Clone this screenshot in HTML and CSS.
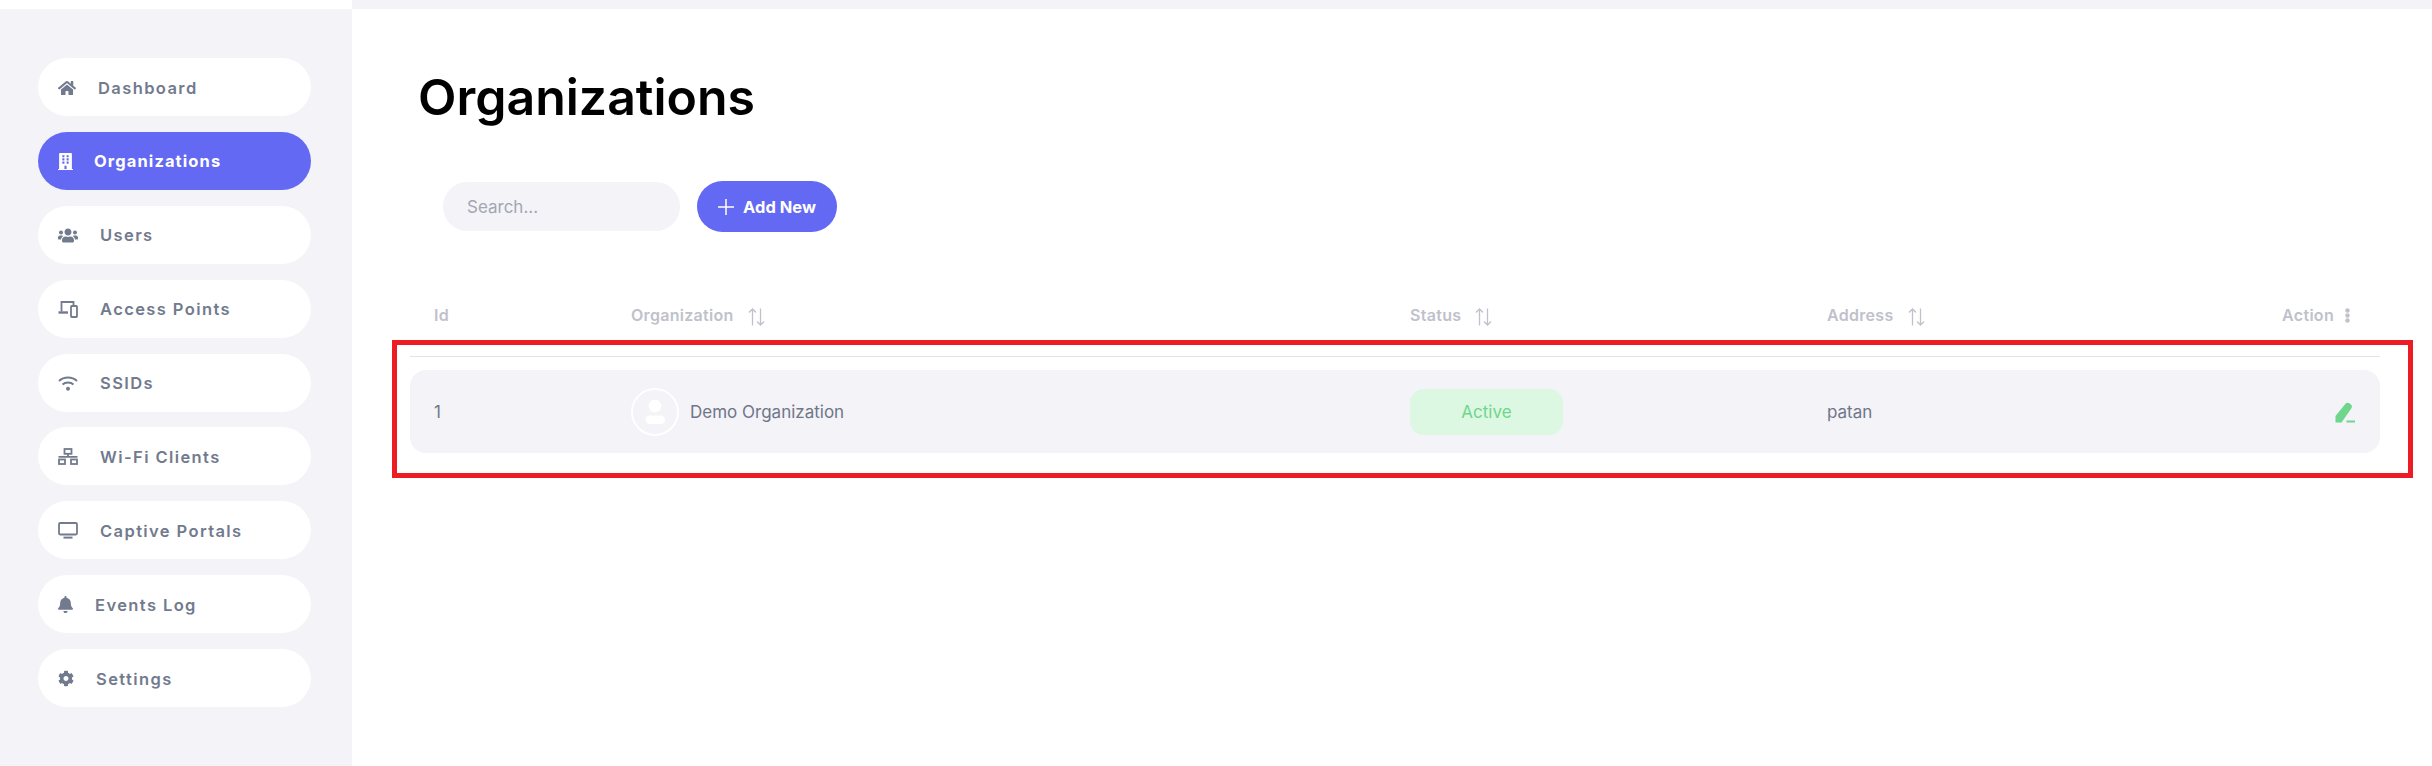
FILE: index.html
```html
<!DOCTYPE html>
<html lang="en">
<head>
    <meta charset="UTF-8">
    <title>Organizations</title>
    <link rel="stylesheet" href="styles.css">
</head>
<body>
    <div class="sidebar">
        <a class="nav-item" href="#">
            <svg class="nav-icon icon-18" viewBox="0 0 576 512"><path d="M280.37 148.26L96 300.11V464a16 16 0 0 0 16 16l112.06-.29a16 16 0 0 0 15.92-16V368a16 16 0 0 1 16-16h64a16 16 0 0 1 16 16v95.64a16 16 0 0 0 16 16.05L464 480a16 16 0 0 0 16-16V300L295.67 148.26a12.19 12.19 0 0 0-15.3 0zM571.6 251.47L488 182.56V44.05a12 12 0 0 0-12-12h-56a12 12 0 0 0-12 12v72.61L318.47 43a48 48 0 0 0-61 0L4.34 251.47a12 12 0 0 0-1.6 16.9l25.5 31A12 12 0 0 0 45.15 301l235.22-193.74a12.19 12.19 0 0 1 15.3 0L530.9 301a12 12 0 0 0 16.9-1.6l25.5-31a12 12 0 0 0-1.7-16.93z"/></svg>
            Dashboard
        </a>
        <a class="nav-item active" href="#">
            <svg class="nav-icon icon-15" viewBox="0 0 448 512"><path d="M436 480h-20V24c0-13.255-10.745-24-24-24H56C42.745 0 32 10.745 32 24v456H12c-6.627 0-12 5.373-12 12v20h448v-20c0-6.627-5.373-12-12-12zM128 76c0-6.627 5.373-12 12-12h40c6.627 0 12 5.373 12 12v40c0 6.627-5.373 12-12 12h-40c-6.627 0-12-5.373-12-12V76zm0 96c0-6.627 5.373-12 12-12h40c6.627 0 12 5.373 12 12v40c0 6.627-5.373 12-12 12h-40c-6.627 0-12-5.373-12-12v-40zm52 148h-40c-6.627 0-12-5.373-12-12v-40c0-6.627 5.373-12 12-12h40c6.627 0 12 5.373 12 12v40c0 6.627-5.373 12-12 12zm76 160h-64v-84c0-6.627 5.373-12 12-12h40c6.627 0 12 5.373 12 12v84zm64-172c0 6.627-5.373 12-12 12h-40c-6.627 0-12-5.373-12-12v-40c0-6.627 5.373-12 12-12h40c6.627 0 12 5.373 12 12v40zm0-96c0 6.627-5.373 12-12 12h-40c-6.627 0-12-5.373-12-12v-40c0-6.627 5.373-12 12-12h40c6.627 0 12 5.373 12 12v40zm0-96c0 6.627-5.373 12-12 12h-40c-6.627 0-12-5.373-12-12V76c0-6.627 5.373-12 12-12h40c6.627 0 12 5.373 12 12v40z"/></svg>
            Organizations
        </a>
        <a class="nav-item" href="#">
            <svg class="nav-icon icon-20" viewBox="0 0 640 512"><path d="M96 224c35.3 0 64-28.7 64-64s-28.7-64-64-64-64 28.7-64 64 28.7 64 64 64zm448 0c35.3 0 64-28.7 64-64s-28.7-64-64-64-64 28.7-64 64 28.7 64 64 64zm32 32h-64c-17.6 0-33.5 7.1-45.1 18.6 40.3 22.1 68.9 62 75.1 109.4h66c17.7 0 32-14.3 32-32v-32c0-35.3-28.7-64-64-64zm-256 0c61.9 0 112-50.1 112-112S381.9 32 320 32 208 82.1 208 144s50.1 112 112 112zm76.8 32h-8.3c-20.8 10-43.9 16-68.5 16s-47.6-6-68.5-16h-8.3C179.6 288 128 339.6 128 403.2V432c0 26.5 21.5 48 48 48h288c26.5 0 48-21.5 48-48v-28.8c0-63.6-51.6-115.2-115.2-115.2zm-223.7-13.4C161.5 263.1 145.6 256 128 256H64c-35.3 0-64 28.7-64 64v32c0 17.7 14.3 32 32 32h65.9c6.3-47.4 34.9-87.3 75.2-109.4z"/></svg>
            Users
        </a>
        <a class="nav-item" href="#">
            <svg class="nav-icon icon-20 line" viewBox="0 0 20 17"><path d="M3.5 10.5V1h12v3.5"/><path d="M0.5 11.5H10" stroke-width="2.4"/><rect x="13" y="5" width="6" height="11" rx="0.8"/></svg>
            Access Points
        </a>
        <a class="nav-item" href="#">
            <svg class="nav-icon icon-20 line" viewBox="0 0 20 16"><path d="M1 5.5c5-4.6 13-4.6 18 0M4.5 9c3-2.6 8-2.6 11 0" stroke-width="2"/><circle class="dot" cx="10" cy="13.2" r="2"/></svg>
            SSIDs
        </a>
        <a class="nav-item" href="#">
            <svg class="nav-icon icon-20 line" viewBox="0 0 20 17"><rect x="6.5" y="1" width="7" height="4.8"/><rect x="1" y="11.5" width="6" height="4.5"/><rect x="13" y="11.5" width="6" height="4.5"/><path d="M10 5.8v3M0.5 8.800h19"/></svg>
            Wi-Fi Clients
        </a>
        <a class="nav-item" href="#">
            <svg class="nav-icon icon-20 line" viewBox="0 0 20 17"><rect x="1" y="1" width="18" height="11.5" rx="1.2"/><path d="M5.5 15.6h9" stroke-width="2"/></svg>
            Captive Portals
        </a>
        <a class="nav-item" href="#">
            <svg class="nav-icon icon-15" viewBox="0 0 448 512"><path d="M224 512c35.32 0 63.97-28.65 63.97-64H160.03c0 35.35 28.65 64 63.97 64zm215.39-149.71c-19.32-20.76-55.47-51.99-55.47-154.29 0-77.7-54.48-139.9-127.94-155.16V32c0-17.67-14.32-32-31.98-32s-31.98 14.33-31.98 32v20.84C118.56 68.1 64.08 130.3 64.08 208c0 102.3-36.15 133.53-55.47 154.29-6 6.45-8.66 14.16-8.61 21.71.11 16.4 12.98 32 32.1 32h383.8c19.12 0 32-15.6 32.1-32 .05-7.55-2.61-15.27-8.61-21.71z"/></svg>
            Events Log
        </a>
        <a class="nav-item" href="#">
            <svg class="nav-icon icon-16" viewBox="0 0 512 512"><path d="M487.4 315.7l-42.6-24.6c4.3-23.2 4.3-47 0-70.2l42.6-24.6c4.9-2.8 7.1-8.6 5.5-14-11.1-35.6-30-67.8-54.7-94.6-3.8-4.1-10-5.1-14.8-2.3L380.8 110c-17.9-15.4-38.5-27.3-60.8-35.1V25.8c0-5.6-3.9-10.5-9.4-11.7-36.7-8.2-74.3-7.8-109.2 0-5.5 1.2-9.4 6.1-9.4 11.7V75c-22.2 7.9-42.8 19.8-60.8 35.1L88.7 85.5c-4.9-2.8-11-1.9-14.8 2.3-24.7 26.7-43.6 58.9-54.7 94.6-1.7 5.4.6 11.2 5.5 14L67.3 221c-4.3 23.2-4.3 47 0 70.2l-42.6 24.6c-4.9 2.8-7.1 8.6-5.5 14 11.1 35.6 30 67.8 54.7 94.6 3.8 4.1 10 5.1 14.8 2.3l42.6-24.6c17.9 15.4 38.5 27.3 60.8 35.1v49.2c0 5.6 3.9 10.5 9.4 11.7 36.7 8.2 74.3 7.8 109.2 0 5.5-1.2 9.4-6.1 9.4-11.7v-49.2c22.2-7.9 42.8-19.8 60.8-35.1l42.6 24.6c4.9 2.8 11 1.9 14.8-2.3 24.7-26.7 43.6-58.9 54.7-94.6 1.5-5.5-.7-11.3-5.6-14.1zM256 336c-44.1 0-80-35.9-80-80s35.9-80 80-80 80 35.9 80 80-35.9 80-80 80z"/></svg>
            Settings
        </a>
    </div>

    <div class="main">
        <div class="top-strip"></div>
        <div class="content">
            <h1 class="page-title">Organizations</h1>

            <div class="toolbar">
                <input class="search" type="text" placeholder="Search...">
                <button class="add-btn">
                    <svg class="plus" viewBox="0 0 16 16"><path d="M8 0v16M0 8h16"/></svg>
                    Add New
                </button>
            </div>

            <div class="table">
                <div class="table-head">
                    <div class="cell">Id</div>
                    <div class="cell">Organization
                        <svg class="sort" viewBox="0 0 17 18"><path d="M4.5 17.5V1M1 4.5L4.5 1 8 4.5M12.5 0.5V17M9 13.5l3.5 3.5 3.5-3.5"/></svg>
                    </div>
                    <div class="cell">Status
                        <svg class="sort" viewBox="0 0 17 18"><path d="M4.5 17.5V1M1 4.5L4.5 1 8 4.5M12.5 0.5V17M9 13.5l3.5 3.5 3.5-3.5"/></svg>
                    </div>
                    <div class="cell">Address
                        <svg class="sort" viewBox="0 0 17 18"><path d="M4.5 17.5V1M1 4.5L4.5 1 8 4.5M12.5 0.5V17M9 13.5l3.5 3.5 3.5-3.5"/></svg>
                    </div>
                    <div class="cell cell-action">Action
                        <svg class="dots" viewBox="0 0 5 15"><circle cx="2.5" cy="2.5" r="2.2"/><circle cx="2.5" cy="7.5" r="2.2"/><circle cx="2.5" cy="12.5" r="2.2"/></svg>
                    </div>
                </div>

                <div class="table-row">
                    <div class="cell">1</div>
                    <div class="cell org-cell">
                        <span class="avatar">
                            <svg viewBox="0 0 44 44"><circle cx="22" cy="16" r="6.5"/><rect x="12.5" y="25.5" width="19.5" height="8.5" rx="4.2"/></svg>
                        </span>
                        Demo Organization
                    </div>
                    <div class="cell"><span class="badge">Active</span></div>
                    <div class="cell">patan</div>
                    <div class="cell cell-action">
                        <svg class="edit" viewBox="0 0 20 21"><path d="M0.5 20.5V14L10.5 1.8c1-1.2 2.6-1.4 3.8-.5l1.6 1.3c1.2 1 1.4 2.6.4 3.8L6.5 20.5z"/><rect x="11.5" y="18.5" width="8.5" height="2"/></svg>
                    </div>
                </div>
            </div>
        </div>
    </div>

    <!-- annotation box drawn on top of the screenshot -->
    <div class="highlight"></div>
</body>
</html>
```

FILE: styles.css
```css
* {
    box-sizing: border-box;
}

html, body {
    height: 100%;
}

body {
    margin: 0;
    display: flex;
    background: #fff;
    font-family: "Inter", "Noto Sans", sans-serif;
    color: #6f7689;
    overflow: hidden;
}

/* Sidebar */
.sidebar {
    width: 352px;
    flex-shrink: 0;
    margin-top: 9px;
    padding: 49px 41px 0 38px;
    background: #f3f3f8;
    display: flex;
    flex-direction: column;
    gap: 15.875px;
}

.nav-item {
    height: 58px;
    display: flex;
    align-items: center;
    gap: 22px;
    padding: 1px 0 0 20px;
    background: #fff;
    border-radius: 29px;
    color: #727a8e;
    text-decoration: none;
    font-size: 16.5px;
    font-weight: 600;
    letter-spacing: 1.4px;
}

.nav-item.active {
    background: #6369f2;
    color: #fff;
    gap: 21px;
    font-weight: 700;
    letter-spacing: 1.1px;
}

.nav-icon {
    flex-shrink: 0;
    fill: currentColor;
}

.nav-icon.line {
    fill: none;
    stroke: currentColor;
    stroke-width: 1.8;
}

.nav-icon .dot {
    fill: currentColor;
    stroke: none;
}

.icon-15 { width: 15px; height: 17px; }
.icon-16 { width: 16px; height: 17px; }
.icon-18 { width: 18px; height: 16px; }
.icon-20 { width: 20px; height: 17px; }

/* Main area */
.main {
    flex: 1;
    min-width: 0;
}

.top-strip {
    height: 9px;
    background: #f3f3f8;
}

.content {
    padding: 0 52px 0 66px;
}

.page-title {
    margin: 56px 0 0;
    font-size: 50px;
    line-height: 64px;
    font-weight: 600;
    color: #000;
}

.toolbar {
    display: flex;
    align-items: center;
    gap: 17px;
    margin: 52px 0 0 25px;
}

.search {
    width: 237px;
    height: 49px;
    padding: 0 24px;
    border: 0;
    border-radius: 25px;
    background: #f3f3f8;
    font-family: inherit;
    font-size: 17px;
}

.search::placeholder {
    color: #a3a6b3;
}

.add-btn {
    width: 140px;
    height: 51px;
    display: flex;
    align-items: center;
    justify-content: center;
    gap: 9px;
    border: 0;
    border-radius: 26px;
    background: #6369f2;
    color: #fff;
    font-family: inherit;
    font-size: 16.5px;
    font-weight: 700;
}

.plus {
    width: 16px;
    height: 16px;
    fill: none;
    stroke: #fff;
    stroke-width: 1.5;
}

/* Table */
.table {
    margin: 54px 0 0 -8px;
}

.table-head,
.table-row {
    display: grid;
    grid-template-columns: 197px 779px 417px 1fr auto;
    align-items: center;
    padding: 0 25px 0 24px;
}

.table-head {
    height: 71px;
    padding-bottom: 12px;
    padding-right: 30px;
    border-bottom: 1px solid #e3e3ea;
    font-size: 16px;
    font-weight: 600;
    letter-spacing: 0.3px;
    color: #bfc1cc;
}

.table-row {
    height: 83px;
    margin-top: 13px;
    padding-top: 1px;
    background: #f3f3f8;
    border-radius: 16px;
    font-size: 17px;
}

.cell {
    display: flex;
    align-items: center;
    gap: 14px;
}

.cell-action {
    gap: 11px;
    justify-content: flex-end;
}

.org-cell {
    gap: 11px;
}

.sort {
    width: 17px;
    height: 18px;
    margin-top: 3px;
    fill: none;
    stroke: #bfc1cc;
    stroke-width: 1.3;
}

.dots {
    width: 5px;
    height: 15px;
    fill: #bfc1cc;
}

.avatar {
    width: 48px;
    height: 48px;
    border: 2px solid #fff;
    border-radius: 50%;
}

.avatar svg {
    display: block;
    width: 44px;
    height: 44px;
    fill: #fff;
}

.badge {
    width: 153px;
    height: 46px;
    display: flex;
    align-items: center;
    justify-content: center;
    background: #dcf8e2;
    border-radius: 14px;
    color: #6fd68c;
}

.edit {
    width: 20px;
    height: 21px;
    fill: #6fd68c;
}

/* Red box over the row */
.highlight {
    position: absolute;
    left: 392px;
    top: 340px;
    width: 2021px;
    height: 138px;
    border: 5px solid #ed1c24;
}
```
